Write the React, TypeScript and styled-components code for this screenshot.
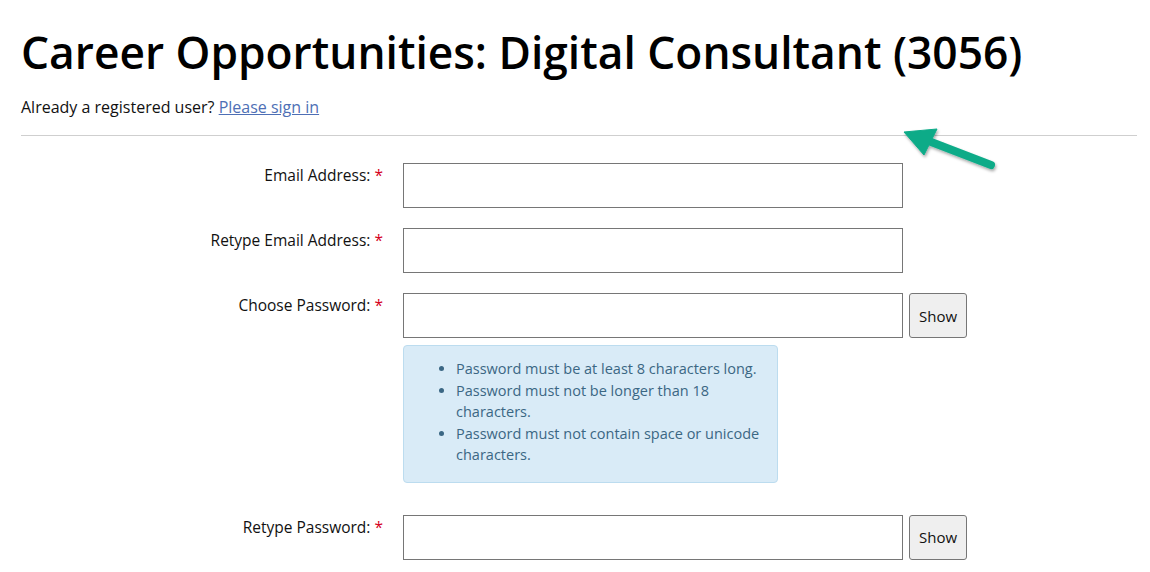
import React from 'react';
import styled, { createGlobalStyle } from 'styled-components';

const GlobalStyle = createGlobalStyle`
    html, body {
        margin: 0;
        padding: 0;
        background: #fff;
    }
    body {
        font-family: "Open Sans", "Noto Sans", sans-serif;
        color: #111;
    }
`;

interface FieldRowProps {
    label: string;
    withShow?: boolean;
    children?: React.ReactNode;
}

const FieldRow: React.FC<FieldRowProps> = ({ label, withShow, children }) => {
    return (
        <Row>
            <Label>
                {label} <Required>*</Required>
            </Label>
            <FieldColumn>
                <InputLine>
                    <TextInput type={withShow ? 'password' : 'text'} />
                    {withShow && <ShowButton type="button">Show</ShowButton>}
                </InputLine>
                {children}
            </FieldColumn>
        </Row>
    );
};

const App: React.FC = () => {
    return (
        <Page>
            <GlobalStyle />
            <Title>Career Opportunities: Digital Consultant (3056)</Title>
            <SignInLine>
                Already a registered user? <SignInLink href="#">Please sign in</SignInLink>
            </SignInLine>
            <Divider />
            <Form>
                <FieldRow label="Email Address:" />
                <FieldRow label="Retype Email Address:" />
                <FieldRow label="Choose Password:" withShow>
                    <InfoBox>
                        <ul>
                            <li>Password must be at least 8 characters long.</li>
                            <li>Password must not be longer than 18 characters.</li>
                            <li>Password must not contain space or unicode characters.</li>
                        </ul>
                    </InfoBox>
                </FieldRow>
                <FieldRow label="Retype Password:" withShow />
            </Form>
            <Arrow width="110" height="60" viewBox="0 0 110 60">
                <defs>
                    <filter id="arrowShadow" x="-20%" y="-20%" width="140%" height="150%">
                        <feDropShadow dx="1" dy="2" stdDeviation="1.5" floodColor="#000" floodOpacity="0.35" />
                    </filter>
                </defs>
                <g filter="url(#arrowShadow)" fill="#0bab88" stroke="#0bab88">
                    <line x1="89" y1="41" x2="24" y2="16" strokeWidth="8" strokeLinecap="round" />
                    <polygon points="2,8 35,5 22,31" strokeWidth="1" strokeLinejoin="round" />
                </g>
            </Arrow>
        </Page>
    );
};

export default App;

const Page = styled.div`
    position: relative;
    padding: 24px 13px 0 21px;
`;

const Title = styled.h1`
    margin: 0;
    font-size: 44.3px;
    line-height: 56px;
    font-weight: 650;
    color: #000;
`;

const SignInLine = styled.p`
    margin: 17px 0 0;
    font-size: 16px;
    line-height: 20px;
    color: #111;
`;

const SignInLink = styled.a`
    color: #4e6fb5;
    text-decoration: underline;
`;

const Divider = styled.hr`
    margin: 18px 0 0;
    border: none;
    border-top: 1px solid #cfcfcf;
    height: 0;
`;

const Form = styled.div`
    display: flex;
    flex-direction: column;
    gap: 20px;
    padding-top: 27px;
`;

const Row = styled.div`
    display: grid;
    grid-template-columns: 362px 1fr;
    column-gap: 20px;
`;

const Label = styled.label`
    text-align: right;
    font-size: 15.5px;
    line-height: 20px;
    padding-top: 2px;
    color: #111;
`;

const Required = styled.span`
    color: #d5001c;
`;

const FieldColumn = styled.div`
    display: flex;
    flex-direction: column;
    gap: 7px;
`;

const InputLine = styled.div`
    display: flex;
    gap: 6px;
    align-items: stretch;
`;

const TextInput = styled.input`
    box-sizing: border-box;
    width: 500px;
    height: 45px;
    border: 1px solid #767676;
    border-radius: 0;
    padding: 4px 8px;
    font-size: 15px;
    font-family: inherit;
`;

const ShowButton = styled.button`
    box-sizing: border-box;
    width: 58px;
    height: 45px;
    background: #efefef;
    border: 1px solid #767676;
    border-radius: 3px;
    font-family: inherit;
    font-size: 15px;
    color: #111;
    padding: 0;
`;

const InfoBox = styled.div`
    box-sizing: border-box;
    width: 375px;
    margin-bottom: 12px;
    background: #d9ebf7;
    border: 1px solid #bcdcef;
    border-radius: 4px;
    color: #3b6784;
    font-size: 14.5px;
    line-height: 21.5px;
    padding: 12px 16px 16px 0;

    ul {
        margin: 0;
        padding-left: 52px;
    }
`;

const Arrow = styled.svg`
    position: absolute;
    left: 902px;
    top: 124px;
    overflow: visible;
`;
